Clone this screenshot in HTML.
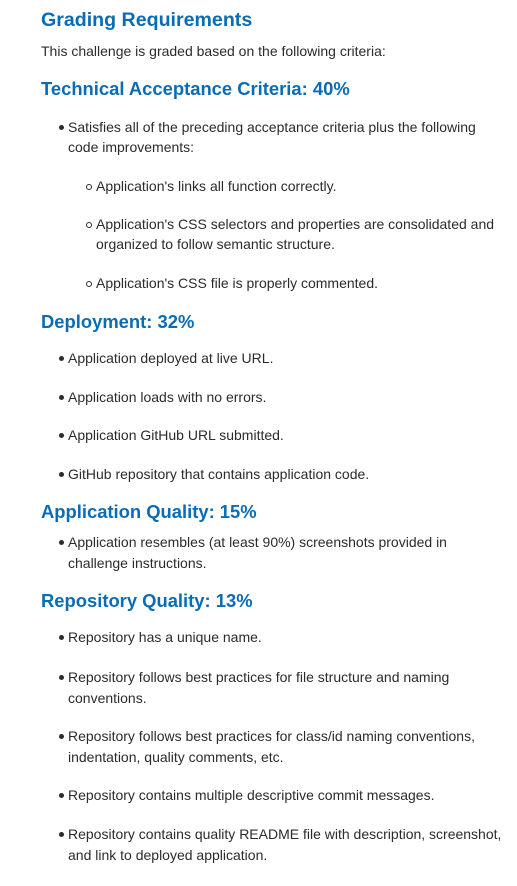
<!DOCTYPE html>
<html><head><meta charset="utf-8"><style>
body{margin:0;width:517px;height:886px;background:#fff;position:relative;overflow:hidden;font-family:"Liberation Sans",Arial,sans-serif;color:#2b2b2b}
div{position:absolute;white-space:nowrap;line-height:20px;font-size:14px}
.h{color:#0a6cb4;font-weight:bold;font-size:18.4px;left:41px;line-height:24px}
.t{left:68px}
.t:before{content:"";position:absolute;left:-9px;top:8px;width:5px;height:5px;border-radius:50%;background:#2b2b2b}
.s{left:96px}
.s:before{content:"";position:absolute;left:-10px;top:8px;width:4px;height:4px;border-radius:50%;border:1px solid #2b2b2b}
</style></head><body>
<div class="h" style="top:8px;font-size:19.6px">Grading Requirements</div>
<div style="left:41px;top:41px">This challenge is graded based on the following criteria:</div>
<div class="h" style="top:77px">Technical Acceptance Criteria: 40%</div>
<div class="t" style="top:117px">Satisfies all of the preceding acceptance criteria plus the following</div>
<div style="left:68px;top:137px">code improvements:</div>
<div class="s" style="top:176px">Application's links all function correctly.</div>
<div class="s" style="top:214px">Application's CSS selectors and properties are consolidated and</div>
<div style="left:96px;top:234px">organized to follow semantic structure.</div>
<div class="s" style="top:273px">Application's CSS file is properly commented.</div>
<div class="h" style="top:310px">Deployment: 32%</div>
<div class="t" style="top:348px">Application deployed at live URL.</div>
<div class="t" style="top:387px">Application loads with no errors.</div>
<div class="t" style="top:425px">Application GitHub URL submitted.</div>
<div class="t" style="top:464px">GitHub repository that contains application code.</div>
<div class="h" style="top:500px">Application Quality: 15%</div>
<div class="t" style="top:532px">Application resembles (at least 90%) screenshots provided in</div>
<div style="left:68px;top:553px">challenge instructions.</div>
<div class="h" style="top:589px">Repository Quality: 13%</div>
<div class="t" style="top:627px">Repository has a unique name.</div>
<div class="t" style="top:667px">Repository follows best practices for file structure and naming</div>
<div style="left:68px;top:688px">conventions.</div>
<div class="t" style="top:726px">Repository follows best practices for class/id naming conventions,</div>
<div style="left:68px;top:747px">indentation, quality comments, etc.</div>
<div class="t" style="top:785px">Repository contains multiple descriptive commit messages.</div>
<div class="t" style="top:824px">Repository contains quality README file with description, screenshot,</div>
<div style="left:68px;top:845px">and link to deployed application.</div>
</body></html>
